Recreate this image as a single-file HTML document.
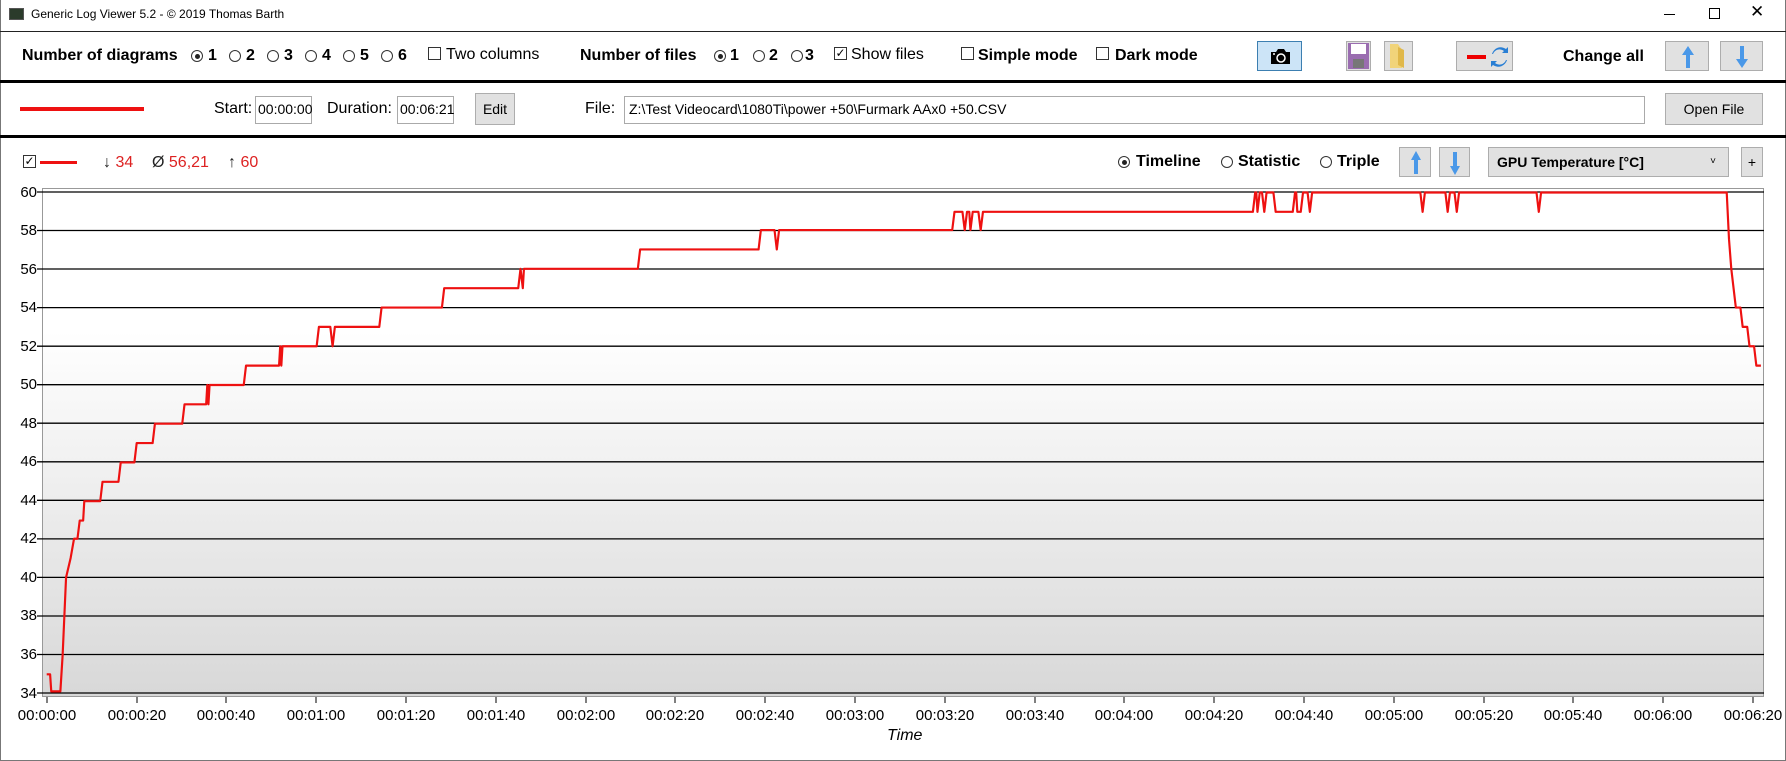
<!DOCTYPE html>
<html><head><meta charset="utf-8"><style>
*{margin:0;padding:0;box-sizing:border-box}
body{width:1786px;height:761px;background:#fff;font-family:"Liberation Sans",sans-serif;position:relative;overflow:hidden;color:#000}
.a{position:absolute;white-space:nowrap}
.b{font-weight:bold;font-size:16px}
.n{font-size:16px}
.rad{position:absolute;width:12px;height:12px;border:1px solid #333;border-radius:50%;background:#fff}
.rad.on::after{content:"";position:absolute;left:2.5px;top:2.5px;width:5px;height:5px;border-radius:50%;background:#222}
.chk{position:absolute;width:13px;height:13px;border:1px solid #333;background:#fff;font-size:12px;line-height:11px;text-align:center}
.btn{position:absolute;background:#e1e1e1;border:1px solid #adadad}
.inp{position:absolute;border:1px solid #aaa;background:#fff;font-size:14px;padding:4px 2px}
.yl{position:absolute;left:0;width:37px;text-align:right;font-size:15px}
.xl{position:absolute;font-size:15px;width:100px;text-align:center}
</style></head><body>
<div class="a" style="left:0;top:0;width:1786px;height:761px;border:1px solid #777;border-top:none"></div>
<div class="a" style="left:9px;top:8px;width:15px;height:12px;background:#2b3b2b;border:1px solid #555"></div>
<div class="a" style="left:31px;top:7px;font-size:12px">Generic Log Viewer 5.2 - © 2019 Thomas Barth</div>
<div class="a" style="left:1664px;top:14px;width:11px;height:1px;background:#000"></div>
<div class="a" style="left:1709px;top:8px;width:11px;height:11px;border:1px solid #000"></div>
<div class="a" style="left:1750px;top:2px;font-size:17px">✕</div>
<div class="a" style="left:0;top:31px;width:1786px;height:1px;background:#222"></div>
<div class="a b" style="left:22px;top:47px">Number of diagrams</div>
<div class="rad on" style="left:191px;top:50px"></div><div class="a b" style="left:208px;top:47px">1</div>
<div class="rad" style="left:229px;top:50px"></div><div class="a b" style="left:246px;top:47px">2</div>
<div class="rad" style="left:267px;top:50px"></div><div class="a b" style="left:284px;top:47px">3</div>
<div class="rad" style="left:305px;top:50px"></div><div class="a b" style="left:322px;top:47px">4</div>
<div class="rad" style="left:343px;top:50px"></div><div class="a b" style="left:360px;top:47px">5</div>
<div class="rad" style="left:381px;top:50px"></div><div class="a b" style="left:398px;top:47px">6</div>
<div class="chk" style="left:428px;top:47px"></div><div class="a n" style="left:446px;top:46px">Two columns</div>
<div class="a b" style="left:580px;top:47px">Number of files</div>
<div class="rad on" style="left:714px;top:50px"></div><div class="a b" style="left:730px;top:47px">1</div>
<div class="rad" style="left:753px;top:50px"></div><div class="a b" style="left:769px;top:47px">2</div>
<div class="rad" style="left:791px;top:50px"></div><div class="a b" style="left:805px;top:47px">3</div>
<div class="chk" style="left:834px;top:47px">✓</div><div class="a n" style="left:851px;top:46px">Show files</div>
<div class="chk" style="left:961px;top:47px"></div><div class="a b" style="left:978px;top:47px">Simple mode</div>
<div class="chk" style="left:1096px;top:47px"></div><div class="a b" style="left:1115px;top:47px">Dark mode</div>
<div class="btn" style="left:1257px;top:41px;width:45px;height:30px;background:#cce4f7;border-color:#3c7fb1">
<svg width="45" height="30" viewBox="0 0 45 30"><path d="M13 10h5l2-3h6l2 3h4v12h-19z" fill="#000"/><circle cx="23" cy="16" r="4" fill="none" stroke="#fff" stroke-width="1.5"/><circle cx="16" cy="12" r="1" fill="#fff"/></svg></div>
<svg class="a" style="left:1346px;top:41px" width="25" height="30" viewBox="0 0 25 30"><rect x="0.5" y="0.5" width="24" height="29" fill="#e1e1e1" stroke="#adadad"/><rect x="2" y="2" width="21" height="26" fill="#9a6db0"/><rect x="5" y="3" width="15" height="10" fill="#fff"/><rect x="7" y="18" width="11" height="9" fill="#777"/></svg>
<svg class="a" style="left:1384px;top:41px" width="29" height="30" viewBox="0 0 29 30"><rect x="0.5" y="0.5" width="28" height="29" fill="#e1e1e1" stroke="#adadad"/><path d="M6 3h8l4 6v18h-12z" fill="#f1d47a"/><path d="M14 6l6 3v18l-6-3z" fill="#e0b84a"/></svg>
<div class="btn" style="left:1456px;top:41px;width:57px;height:30px">
<svg width="57" height="30"><rect x="10" y="13" width="19" height="4" fill="#e00"/><path d="M36 12a7 7 0 0 1 11-3l-2 2h6v-6l-2 2a9 9 0 0 0-14 5z M49 18a7 7 0 0 1-11 3l2-2h-6v6l2-2a9 9 0 0 0 14-5z" fill="#2a7fd4"/></svg></div>
<div class="a b" style="left:1563px;top:48px">Change all</div>
<div class="btn" style="left:1665px;top:41px;width:44px;height:30px"><svg width="44" height="30"><path d="M22 4l-6 9h4v13h4v-13h4z" fill="#4a98e8"/></svg></div>
<div class="btn" style="left:1720px;top:41px;width:43px;height:30px"><svg width="43" height="30"><path d="M21 26l-6-9h4v-13h4v13h4z" fill="#4a98e8"/></svg></div>
<div class="a" style="left:0;top:80px;width:1786px;height:3px;background:#000"></div>
<div class="a" style="left:20px;top:107px;width:124px;height:4px;background:#e11"></div>
<div class="a n" style="left:214px;top:100px">Start:</div>
<div class="inp" style="left:255px;top:96px;width:57px;height:28px">00:00:00</div>
<div class="a n" style="left:327px;top:100px">Duration:</div>
<div class="inp" style="left:397px;top:96px;width:57px;height:28px">00:06:21</div>
<div class="btn" style="left:475px;top:93px;width:40px;height:32px;font-size:14px;text-align:center;line-height:30px">Edit</div>
<div class="a n" style="left:585px;top:100px">File:</div>
<div class="inp" style="left:624px;top:96px;width:1021px;height:28px;padding-left:4px">Z:\Test Videocard\1080Ti\power +50\Furmark AAx0 +50.CSV</div>
<div class="btn" style="left:1665px;top:93px;width:98px;height:32px;font-size:14px;text-align:center;line-height:30px">Open File</div>
<div class="a" style="left:0;top:135px;width:1786px;height:3px;background:#000"></div>
<div class="chk" style="left:23px;top:155px">✓</div>
<div class="a" style="left:40px;top:161px;width:37px;height:3px;background:#e11"></div>
<div class="a n" style="left:103px;top:154px;color:#222">↓ <span style="color:#d22">34</span></div>
<div class="a n" style="left:152px;top:154px;color:#222">Ø <span style="color:#d22">56,21</span></div>
<div class="a n" style="left:228px;top:154px;color:#222">↑ <span style="color:#d22">60</span></div>
<div class="rad on" style="left:1118px;top:156px"></div><div class="a b" style="left:1136px;top:153px">Timeline</div>
<div class="rad" style="left:1221px;top:156px"></div><div class="a b" style="left:1238px;top:153px">Statistic</div>
<div class="rad" style="left:1320px;top:156px"></div><div class="a b" style="left:1337px;top:153px">Triple</div>
<div class="btn" style="left:1399px;top:147px;width:32px;height:30px"><svg width="32" height="30"><path d="M16 3l-5 9h3v14h4v-14h3z" fill="#4a98e8"/></svg></div>
<div class="btn" style="left:1439px;top:147px;width:31px;height:30px"><svg width="31" height="30"><path d="M15 27l-5-9h3v-14h4v14h3z" fill="#4a98e8"/></svg></div>
<div class="btn" style="left:1488px;top:147px;width:241px;height:30px;font-size:14px;font-weight:bold;line-height:28px;padding-left:8px">GPU Temperature [°C]<span style="position:absolute;right:12px;top:0;font-size:10px;font-weight:normal">˅</span></div>
<div class="btn" style="left:1741px;top:147px;width:22px;height:30px;font-size:14px;text-align:center;line-height:28px">+</div>
<div class="a" style="left:42px;top:188px;width:1722px;height:509px;border:1px solid #999;background:linear-gradient(#fff 0%,#fff 28%,#d8d8d8 100%)"></div>
<svg class="a" style="left:0;top:0" width="1786" height="761">
<g stroke="#000" stroke-width="1.3">
<line x1="37" x2="1764" y1="192" y2="192"/><line x1="37" x2="1764" y1="230.5" y2="230.5"/><line x1="37" x2="1764" y1="269" y2="269"/><line x1="37" x2="1764" y1="307.6" y2="307.6"/><line x1="37" x2="1764" y1="346.2" y2="346.2"/><line x1="37" x2="1764" y1="384.7" y2="384.7"/><line x1="37" x2="1764" y1="423.2" y2="423.2"/><line x1="37" x2="1764" y1="461.8" y2="461.8"/><line x1="37" x2="1764" y1="500.3" y2="500.3"/><line x1="37" x2="1764" y1="538.9" y2="538.9"/><line x1="37" x2="1764" y1="577.4" y2="577.4"/><line x1="37" x2="1764" y1="616" y2="616"/><line x1="37" x2="1764" y1="654.5" y2="654.5"/><line x1="37" x2="1764" y1="693" y2="693"/>
</g>
<g stroke="#000" stroke-width="1">
<line x1="47" x2="47" y1="697" y2="703"/><line x1="137" x2="137" y1="697" y2="703"/><line x1="226" x2="226" y1="697" y2="703"/><line x1="316" x2="316" y1="697" y2="703"/><line x1="406" x2="406" y1="697" y2="703"/><line x1="496" x2="496" y1="697" y2="703"/><line x1="586" x2="586" y1="697" y2="703"/><line x1="675" x2="675" y1="697" y2="703"/><line x1="765" x2="765" y1="697" y2="703"/><line x1="855" x2="855" y1="697" y2="703"/><line x1="945" x2="945" y1="697" y2="703"/><line x1="1035" x2="1035" y1="697" y2="703"/><line x1="1124" x2="1124" y1="697" y2="703"/><line x1="1214" x2="1214" y1="697" y2="703"/><line x1="1304" x2="1304" y1="697" y2="703"/><line x1="1394" x2="1394" y1="697" y2="703"/><line x1="1484" x2="1484" y1="697" y2="703"/><line x1="1573" x2="1573" y1="697" y2="703"/><line x1="1663" x2="1663" y1="697" y2="703"/><line x1="1753" x2="1753" y1="697" y2="703"/>
</g>
<g transform="scale(1.139)">
<polyline fill="none" stroke="#e11" stroke-width="1.9" stroke-linejoin="round" points="41,592 44,592 45,607 53,607 55,575 58,507 62,490 65,473 68,473 70,457 73,457 74,440 88,440 90,423 104,423 106,406 118,406 120,389 134,389 136,372 160,372 162,355 181,355 182,338 183,355 184,338 214,338 216,321 245,321 246,304 247,321 248,304 278,304 280,287 290,287 292,304 294,287 333,287 335,270 388,270 390,253 455,253 457,236 459,253 460,236 560,236 562,219 666,219 668,202 680,202 682,219 684,202 836,202 838,186 845,186 847,202 849,186 851,186 852,202 854,186 859,186 861,202 863,186 1100,186 1102,169 1103,169 1104,186 1106,169 1108,169 1110,186 1112,169 1118,169 1120,186 1135,186 1137,169 1138,169 1139,186 1142,186 1144,169 1148,169 1150,186 1152,169 1247,169 1249,186 1251,169 1269,169 1271,186 1273,169 1277,169 1279,186 1281,169 1349,169 1351,186 1353,169 1516,169 1518,210 1520,236 1522,253 1524,270 1528,270 1530,287 1534,287 1536,304 1540,304 1542,321 1546,321"/>
</g>
</svg>
<div class="yl" style="top:184px">60</div><div class="yl" style="top:222px">58</div><div class="yl" style="top:261px">56</div><div class="yl" style="top:299px">54</div><div class="yl" style="top:338px">52</div><div class="yl" style="top:376px">50</div><div class="yl" style="top:415px">48</div><div class="yl" style="top:453px">46</div><div class="yl" style="top:492px">44</div><div class="yl" style="top:530px">42</div><div class="yl" style="top:569px">40</div><div class="yl" style="top:607px">38</div><div class="yl" style="top:646px">36</div><div class="yl" style="top:685px">34</div>
<div class="xl" style="left:-3px;top:707px">00:00:00</div><div class="xl" style="left:87px;top:707px">00:00:20</div><div class="xl" style="left:176px;top:707px">00:00:40</div><div class="xl" style="left:266px;top:707px">00:01:00</div><div class="xl" style="left:356px;top:707px">00:01:20</div><div class="xl" style="left:446px;top:707px">00:01:40</div><div class="xl" style="left:536px;top:707px">00:02:00</div><div class="xl" style="left:625px;top:707px">00:02:20</div><div class="xl" style="left:715px;top:707px">00:02:40</div><div class="xl" style="left:805px;top:707px">00:03:00</div><div class="xl" style="left:895px;top:707px">00:03:20</div><div class="xl" style="left:985px;top:707px">00:03:40</div><div class="xl" style="left:1074px;top:707px">00:04:00</div><div class="xl" style="left:1164px;top:707px">00:04:20</div><div class="xl" style="left:1254px;top:707px">00:04:40</div><div class="xl" style="left:1344px;top:707px">00:05:00</div><div class="xl" style="left:1434px;top:707px">00:05:20</div><div class="xl" style="left:1523px;top:707px">00:05:40</div><div class="xl" style="left:1613px;top:707px">00:06:00</div><div class="xl" style="left:1703px;top:707px">00:06:20</div>
<div class="a" style="left:887px;top:727px;font-size:16px;font-style:italic">Time</div>
</body></html>
